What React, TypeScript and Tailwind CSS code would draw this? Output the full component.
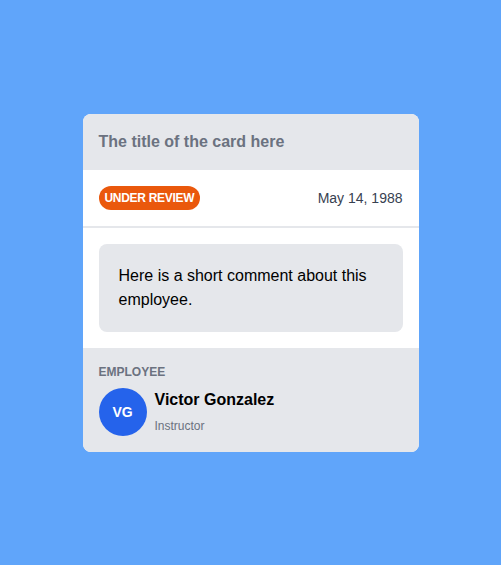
import React from 'react';

const font = { fontFamily: '"Liberation Sans", "Noto Sans", sans-serif' };

export default function App() {
  return (
    <div className="min-h-screen bg-[#60a5fa] flex items-center justify-center" style={font}>
      <article className="w-84 rounded-lg overflow-hidden bg-white">
        <div className="bg-[#e5e7eb] p-4">
          <h2 className="text-base leading-6 font-bold text-[#6b7280]">The title of the card here</h2>
        </div>
        <div className="flex items-center justify-between p-4 border-b-2 border-[#e5e7eb]">
          <span className="px-1.5 py-1 rounded-full bg-[#ea580c] text-white text-xs leading-4 font-bold uppercase tracking-tight">
            Under Review
          </span>
          <span className="text-sm text-[#374151]">May 14, 1988</span>
        </div>
        <div className="p-4">
          <div className="bg-[#e5e7eb] rounded-lg p-5">
            <p className="text-base leading-6 text-black">Here is a short comment about this employee.</p>
          </div>
        </div>
        <div className="bg-[#e5e7eb] p-4">
          <div className="text-xs leading-4 font-bold text-[#6b7280] uppercase mb-2">Employee</div>
          <div className="flex items-center gap-2">
            <div className="w-12 h-12 rounded-full bg-[#2563eb] flex items-center justify-center text-white text-sm font-bold">
              VG
            </div>
            <div>
              <div className="text-base leading-6 font-bold text-black">Victor Gonzalez</div>
              <div className="text-xs leading-5 mt-1 text-[#6b7280]">Instructor</div>
            </div>
          </div>
        </div>
      </article>
    </div>
  );
}
